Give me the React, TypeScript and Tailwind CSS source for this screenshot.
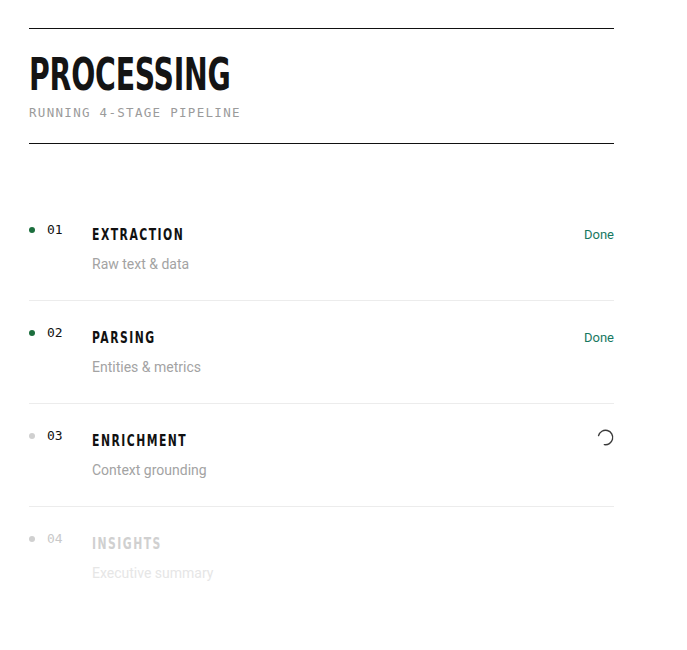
import React from "react";

type Step = {
  n: string;
  title: string;
  sub: string;
  state: "done" | "active" | "pending";
};

const steps: Step[] = [
  { n: "01", title: "EXTRACTION", sub: "Raw text & data", state: "done" },
  { n: "02", title: "PARSING", sub: "Entities & metrics", state: "done" },
  { n: "03", title: "ENRICHMENT", sub: "Context grounding", state: "active" },
  { n: "04", title: "INSIGHTS", sub: "Executive summary", state: "pending" },
];

const cond = { fontFamily: '"DejaVu Sans Condensed", "Liberation Sans", sans-serif', fontStretch: "condensed" as const };
const mono = { fontFamily: '"DejaVu Sans Mono", "Liberation Mono", monospace', fontFeatureSettings: '"zero" 1' };
const body = { fontFamily: 'Roboto, "Liberation Sans", sans-serif' };

function Spinner() {
  return (
    <svg width="17" height="17" viewBox="0 0 17 17" className="block">
      <circle cx="8.5" cy="8.5" r="7.2" fill="none" stroke="#3a3a3a" strokeWidth="1.4" strokeDasharray="33 12.3" strokeLinecap="round" transform="rotate(195 8.5 8.5)" />
    </svg>
  );
}

export default function App() {
  return (
    <div className="min-h-[650px] bg-white">
      <div className="ml-[29px] w-[585px] pt-[28px]">
        <div className="border-t border-b border-[#111] pt-[24px] pb-[22px]">
          <h1
            className="block w-fit text-[45px] leading-[44px] font-bold text-[#141414] origin-left scale-x-[0.7] tracking-[-0.3px]"
            style={cond}
          >
            PROCESSING
          </h1>
          <div className="mt-[8px] text-[12.5px] leading-[16px] tracking-[1.3px] text-[#9b9b9b]" style={mono}>
            RUNNING 4-STAGE PIPELINE
          </div>
        </div>

        <div className="mt-[54px]">
          {steps.map((s, i) => {
            const pending = s.state === "pending";
            return (
              <div
                key={s.n}
                className={`flex items-start pt-[27px] pb-[26px] ${i < steps.length - 1 ? "border-b border-[#ececec]" : ""}`}
              >
                <div className="w-[63px] flex items-center gap-[12px] -mt-[3px]">
                  <span
                    className={`w-[6px] h-[6px] rounded-full ${s.state === "done" ? "bg-[#1c6e3d]" : "bg-[#d0d0d0]"}`}
                  />
                  <span className={`text-[13px] leading-[16px] ${pending ? "text-[#c9c9c9]" : "text-[#111]"}`} style={mono}>
                    {s.n}
                  </span>
                </div>
                <div className="flex-1">
                  <div
                    className={`block w-fit origin-left scale-x-[0.75] text-[16px] leading-[20px] font-bold tracking-[2px] ${pending ? "text-[#d0d0d0]" : "text-[#111]"}`}
                    style={cond}
                  >
                    {s.title}
                  </div>
                  <div
                    className={`mt-[9px] text-[14px] leading-[20px] ${pending ? "text-[#e6e6e6]" : "text-[#a3a3a3]"}`}
                    style={body}
                  >
                    {s.sub}
                  </div>
                </div>
                <div className="-mt-[4px]">
                  {s.state === "done" && (
                    <span className="text-[13px] leading-[18px] text-[#17785f]" style={body}>
                      Done
                    </span>
                  )}
                  {s.state === "active" && (
                    <div className="mt-[2px]">
                      <Spinner />
                    </div>
                  )}
                </div>
              </div>
            );
          })}
        </div>
      </div>
    </div>
  );
}
